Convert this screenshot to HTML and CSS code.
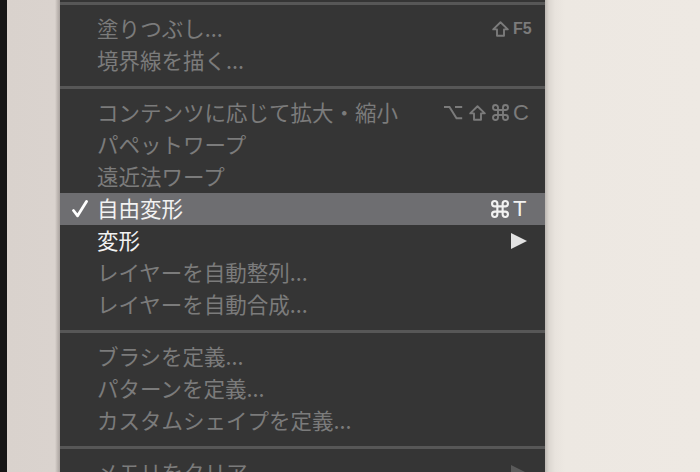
FILE: index.html
```html
<!DOCTYPE html>
<html lang="ja">
<head>
    <meta charset="UTF-8">
    <title>編集メニュー</title>
    <link rel="stylesheet" href="styles.css">
</head>
<body>
    <div class="screen">
        <div class="edge"></div>
        <div class="panel"></div>

        <div class="menu">
            <div class="sep"></div>

            <!-- 塗り -->
            <div class="group">
                <div class="item off">
                    <span class="mark"></span>
                    <span class="label">塗りつぶし...</span>
                    <span class="keys">
                        <span class="mods">
                            <svg class="ico" width="17" height="16" viewBox="0 0 17 16"><path d="M8.5 1.2 L15.8 8.4 H12 V14.8 H5 V8.4 H1.2 Z" fill="none" stroke="currentColor" stroke-width="1.9" stroke-linejoin="round"/></svg>
                        </span>
                        <span class="key fn">F5</span>
                    </span>
                </div>
                <div class="item off">
                    <span class="mark"></span>
                    <span class="label">境界線を描く...</span>
                </div>
            </div>
            <div class="sep"></div>

            <!-- 変形 -->
            <div class="group">
                <div class="item off">
                    <span class="mark"></span>
                    <span class="label">コンテンツに応じて拡大・縮小</span>
                    <span class="keys">
                        <span class="mods">
                            <svg class="ico" width="20" height="15" viewBox="0 0 20 15"><path d="M1 2 H6.5 L13.5 13.2 H19.2 M12 2 H19.2" fill="none" stroke="currentColor" stroke-width="2"/></svg>
                            <svg class="ico" width="17" height="16" viewBox="0 0 17 16"><path d="M8.5 1.2 L15.8 8.4 H12 V14.8 H5 V8.4 H1.2 Z" fill="none" stroke="currentColor" stroke-width="1.9" stroke-linejoin="round"/></svg>
                            <svg class="ico" width="17" height="17" viewBox="0 0 17 17"><path d="M6 6 V3.5 A2.5 2.5 0 1 0 3.5 6 H13.5 A2.5 2.5 0 1 0 11 3.5 V13.5 A2.5 2.5 0 1 0 13.5 11 H3.5 A2.5 2.5 0 1 0 6 13.5 Z" fill="none" stroke="currentColor" stroke-width="1.9"/></svg>
                        </span>
                        <span class="key">C</span>
                    </span>
                </div>
                <div class="item off">
                    <span class="mark"></span>
                    <span class="label">パペットワープ</span>
                </div>
                <div class="item off">
                    <span class="mark"></span>
                    <span class="label">遠近法ワープ</span>
                </div>
                <div class="item selected">
                    <span class="mark">
                        <svg width="16" height="18" viewBox="0 0 16 18">
                            <path d="M1.5 10.5 L5.6 15.8 L14.5 1.5" fill="none" stroke="#fff" stroke-width="2.8" stroke-linecap="round" stroke-linejoin="round"/>
                        </svg>
                    </span>
                    <span class="label">自由変形</span>
                    <span class="keys">
                        <span class="mods">
                            <svg class="ico" width="18" height="18" viewBox="0 0 17 17"><path d="M6 6 V3.5 A2.5 2.5 0 1 0 3.5 6 H13.5 A2.5 2.5 0 1 0 11 3.5 V13.5 A2.5 2.5 0 1 0 13.5 11 H3.5 A2.5 2.5 0 1 0 6 13.5 Z" fill="none" stroke="currentColor" stroke-width="2"/></svg>
                        </span>
                        <span class="key">T</span>
                    </span>
                </div>
                <div class="item">
                    <span class="mark"></span>
                    <span class="label">変形</span>
                    <span class="keys"><span class="key"><span class="arrow"></span></span></span>
                </div>
                <div class="item off">
                    <span class="mark"></span>
                    <span class="label">レイヤーを自動整列...</span>
                </div>
                <div class="item off">
                    <span class="mark"></span>
                    <span class="label">レイヤーを自動合成...</span>
                </div>
            </div>
            <div class="sep"></div>

            <!-- 定義 -->
            <div class="group">
                <div class="item off">
                    <span class="mark"></span>
                    <span class="label">ブラシを定義...</span>
                </div>
                <div class="item off">
                    <span class="mark"></span>
                    <span class="label">パターンを定義...</span>
                </div>
                <div class="item off">
                    <span class="mark"></span>
                    <span class="label">カスタムシェイプを定義...</span>
                </div>
            </div>
            <div class="sep"></div>

            <div class="group">
                <div class="item off">
                    <span class="mark"></span>
                    <span class="label">メモリをクリア</span>
                    <span class="keys"><span class="key"><span class="arrow"></span></span></span>
                </div>
            </div>
        </div>

        <div class="desk"></div>
    </div>
</body>
</html>
```

FILE: styles.css
```css
body {
    margin: 0;
    overflow: hidden;
    font-family: "Noto Sans CJK JP", "Noto Sans", sans-serif;
}
.screen {
    display: flex;
    height: 472px;
    overflow: hidden;
}
.edge {
    width: 7px;
    background: #161616;
}
.panel {
    width: 53px;
    background: linear-gradient(to right, #d9d2cd 0, #dad3ce 48px, #c4bdb8 50px, #a9a29e 53px);
}
.menu {
    width: 485px;
    padding-top: 2px;
    background: #353535;
}
.desk {
    flex: 1;
    background: linear-gradient(to right, #bdb8b3 0, #dcd7d1 4px, #e8e3dd 10px, #ede8e2 20px, #eee9e3 100%);
}
.sep {
    height: 3px;
    background: #575757;
}
.group {
    padding: 8px 0 9px;
}
.item {
    display: flex;
    align-items: center;
    height: 32px;
    color: #f2f2f2;
    font-size: 21.5px;
    white-space: nowrap;
}
.item.off {
    color: #7b7b7b;
}
.item.selected {
    background: #6e6e71;
}
.label {
    line-height: 30px;
    padding-bottom: 2px;
}
.mark {
    display: flex;
    align-items: center;
    width: 37px;
    padding-left: 12px;
    box-sizing: border-box;
    height: 32px;
}
.keys {
    display: flex;
    align-items: center;
    margin-left: auto;
    font-family: "Liberation Sans", Arial, sans-serif;
}
.mods {
    display: flex;
    align-items: center;
    gap: 6px;
    padding-bottom: 1px;
}
.ico {
    display: block;
}
.key {
    display: flex;
    align-items: center;
    width: 36px;
    padding-left: 4px;
    box-sizing: border-box;
    font-size: 22px;
}
.key.fn {
    font-size: 16px;
    font-weight: bold;
}
.arrow {
    width: 0;
    height: 0;
    margin-left: -2px;
    border-left: 16px solid #e2e2e2;
    border-top: 8px solid transparent;
    border-bottom: 8px solid transparent;
}
.item.off .arrow {
    border-left-color: #5a5a5a;
}
```
